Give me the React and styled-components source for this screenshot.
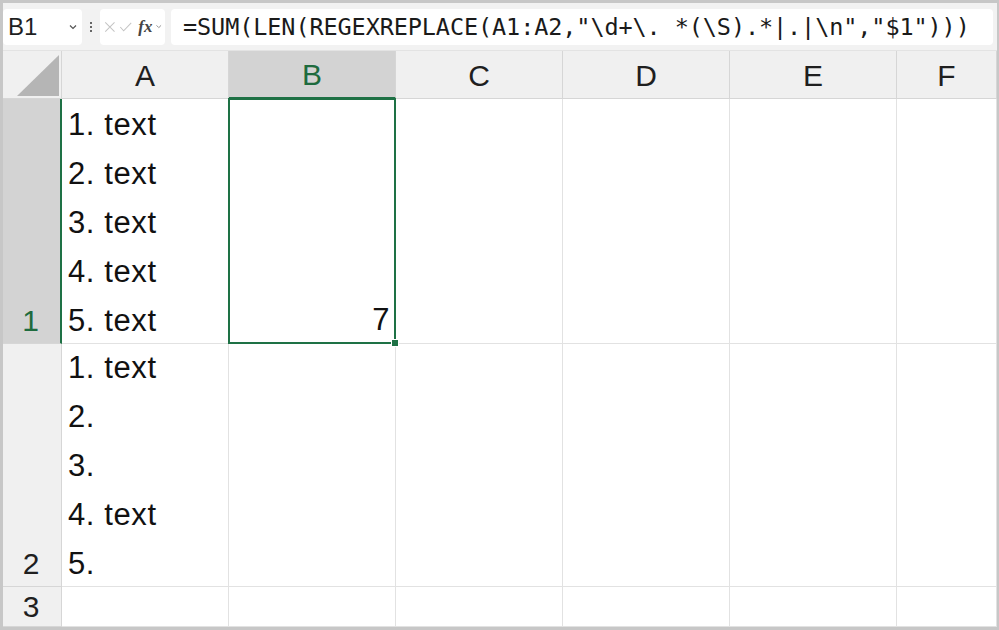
import React from "react";
import styled, { createGlobalStyle } from "styled-components";

const Global = createGlobalStyle`
  body {
    margin: 0;
    background: #fff;
    font-family: "Liberation Sans", Arial, sans-serif;
  }
`;

const Frame = styled.div`
  width: 999px;
  height: 630px;
  box-sizing: border-box;
  border: 3px solid #c7c7c7;
  border-right-width: 2px;
  display: flex;
  flex-direction: column;
  overflow: hidden;
  background: #fff;
`;

const Toolbar = styled.div`
  height: 47px;
  flex: none;
  display: flex;
  align-items: center;
  gap: 5px;
  padding: 0 4px 0 0;
  background: #f2f2f2;
  border-bottom: 1px solid #e3e3e3;
`;

const Box = styled.div`
  height: 36px;
  background: #fff;
  border-radius: 4px;
  display: flex;
  align-items: center;
  box-sizing: border-box;
`;

const NameBox = styled(Box)`
  width: 79px;
  padding: 0 4px 0 5px;
  justify-content: space-between;
  font-size: 24px;
  color: #1f1f1f;
`;

const Grip = styled.div`
  width: 8px;
  display: flex;
  flex-direction: column;
  align-items: center;
  gap: 2px;
  span {
    width: 2px;
    height: 2px;
    background: #666;
  }
`;

const FxBox = styled(Box)`
  width: 65px;
  padding: 0 2px 0 4px;
  gap: 3px;
`;

const Fx = styled.span`
  font-family: "Liberation Serif", serif;
  font-style: italic;
  font-weight: bold;
  font-size: 17px;
  color: #444;
  margin-left: 3px;
`;

const FormulaBox = styled(Box)`
  flex: 1;
  margin-left: 1px;
  padding-left: 12px;
  font-family: "DejaVu Sans Mono", "Liberation Mono", monospace;
  font-size: 23.5px;
  letter-spacing: -0.1px;
  color: #1a1a1a;
  white-space: pre;
  overflow: hidden;
`;

const Sheet = styled.div`
  flex: 1;
  display: grid;
  grid-template-columns: 59px repeat(5, 167px) 1fr;
  grid-template-rows: 48px 245px 243px 1fr;
`;

const Corner = styled.div`
  background: #f0f0f0;
  border-right: 1px solid #d6d6d6;
  border-bottom: 1px solid #d6d6d6;
  position: relative;
  svg {
    position: absolute;
    right: 2px;
    bottom: 2px;
  }
`;

const ColHead = styled.div`
  background: ${(p) => (p.$active ? "#d3d3d3" : "#f0f0f0")};
  color: ${(p) => (p.$active ? "#1e6b3e" : "#1f1f1f")};
  border-right: 1px solid #d6d6d6;
  border-bottom: ${(p) => (p.$active ? "2px solid #1e7145" : "1px solid #d6d6d6")};
  display: flex;
  align-items: center;
  justify-content: center;
  font-size: 30px;
  padding-top: 2px;
  box-sizing: border-box;
`;

const RowHead = styled.div`
  background: ${(p) => (p.$active ? "#d3d3d3" : "#f0f0f0")};
  color: ${(p) => (p.$active ? "#1e6b3e" : "#1f1f1f")};
  border-right: ${(p) => (p.$active ? "2px solid #1e7145" : "1px solid #d6d6d6")};
  border-bottom: 1px solid #d6d6d6;
  display: flex;
  justify-content: center;
  align-items: ${(p) => (p.$short ? "center" : "flex-end")};
  font-size: 30px;
  line-height: ${(p) => (p.$short ? "normal" : "49px")};
  box-sizing: border-box;
  padding-right: 2px;
  span {
    transform: translateY(${(p) => (p.$short ? "0" : "2px")});
  }
`;

const Cell = styled.div`
  border-right: 1px solid #e2e2e2;
  border-bottom: 1px solid #e2e2e2;
  box-sizing: border-box;
  padding: 0 6px;
  font-size: 31px;
  letter-spacing: 0.6px;
  line-height: 49px;
  color: #111;
  white-space: pre;
  overflow: hidden;
  display: flex;
  flex-direction: column;
  justify-content: flex-end;
  align-items: ${(p) => (p.$right ? "flex-end" : "flex-start")};
  span {
    transform: translateY(2px);
  }
`;

const Selected = styled(Cell)`
  border: 2px solid #1e7145;
  margin: -1px 0 0 -1px;
  position: relative;
  padding-right: 4px;
  overflow: visible;
  &::after {
    content: "";
    position: absolute;
    right: -5px;
    bottom: -5px;
    width: 6px;
    height: 6px;
    background: #1e7145;
    border: 1px solid #fff;
    z-index: 2;
  }
`;

const Chevron = ({ size = 10, color = "#555" }) => (
  <svg width={size} height={size} viewBox="0 0 10 10">
    <path d="M2 3.5 L5 6.5 L8 3.5" fill="none" stroke={color} strokeWidth="1.2" />
  </svg>
);

const cols = ["A", "B", "C", "D", "E", "F"];

const rows = [
  { n: "1", a: "1. text\n2. text\n3. text\n4. text\n5. text", b: "7" },
  { n: "2", a: "1. text\n2.\n3.\n4. text\n5.", b: "" },
  { n: "3", a: "", b: "" },
];

export default function App() {
  return (
    <Frame>
      <Global />
      <Toolbar>
        <NameBox>
          <span>B1</span>
          <Chevron />
        </NameBox>
        <Grip>
          <span />
          <span />
          <span />
        </Grip>
        <FxBox>
          <svg width="14" height="14" viewBox="0 0 14 14">
            <path d="M1.5 1.5 L12.5 12.5 M12.5 1.5 L1.5 12.5" stroke="#c4c4c4" strokeWidth="1.2" />
          </svg>
          <svg width="16" height="14" viewBox="0 0 16 14">
            <path d="M1.5 7 L5.5 11.5 L14.5 2" fill="none" stroke="#c4c4c4" strokeWidth="1.2" />
          </svg>
          <Fx>fx</Fx>
          <Chevron size={9} color="#888" />
        </FxBox>
        <FormulaBox>{'=SUM(LEN(REGEXREPLACE(A1:A2,"\\d+\\. *(\\S).*|.|\\n","$1")))'}</FormulaBox>
      </Toolbar>
      <Sheet>
        <Corner>
          <svg width="42" height="41" viewBox="0 0 42 41">
            <polygon points="0,41 42,0 42,41" fill="#b5b5b5" />
          </svg>
        </Corner>
        {cols.map((c) => (
          <ColHead key={c} $active={c === "B"}>
            {c}
          </ColHead>
        ))}
        {rows.map((r) => (
          <React.Fragment key={r.n}>
            <RowHead $active={r.n === "1"} $short={r.n === "3"}>
              <span>{r.n}</span>
            </RowHead>
            <Cell>
              <span>{r.a}</span>
            </Cell>
            {r.n === "1" ? (
              <Selected $right>
                <span>{r.b}</span>
              </Selected>
            ) : (
              <Cell $right>
                <span>{r.b}</span>
              </Cell>
            )}
            <Cell />
            <Cell />
            <Cell />
            <Cell />
          </React.Fragment>
        ))}
      </Sheet>
    </Frame>
  );
}
